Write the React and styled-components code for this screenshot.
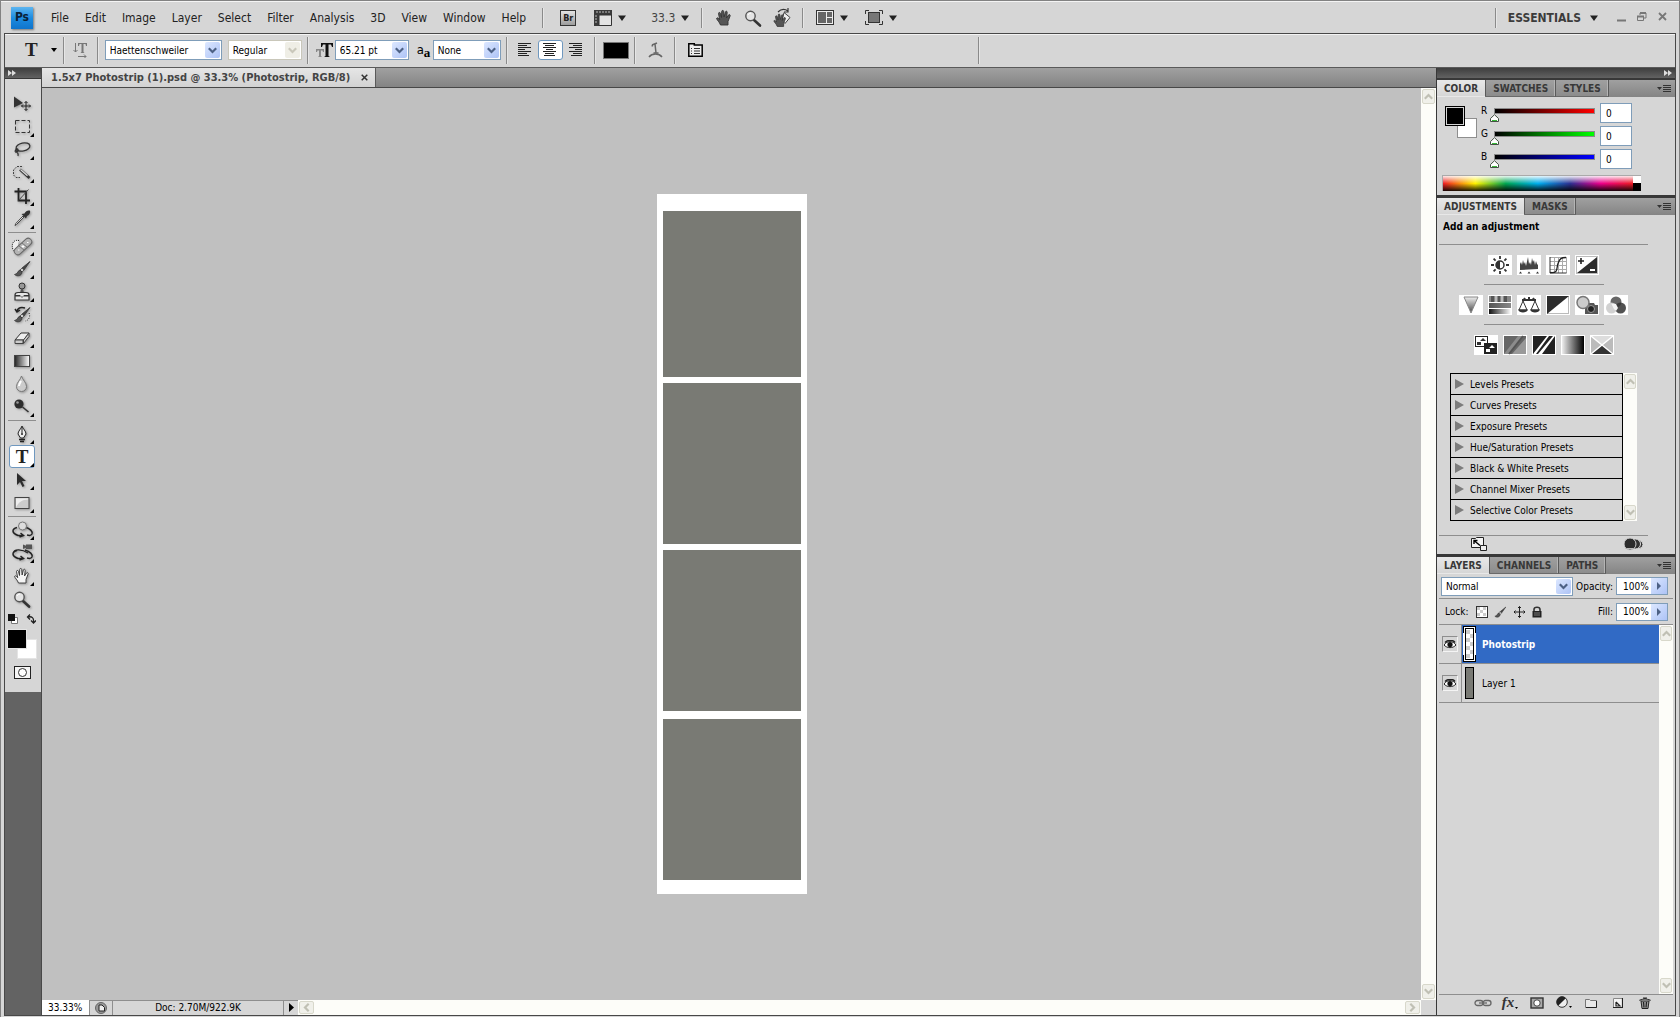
import React from "react";
import styled, { createGlobalStyle, css } from "styled-components";

const GlobalStyle = createGlobalStyle`
  * {
    box-sizing: border-box;
  }

  body {
    margin: 0;
    background: #d6d6d6;
    font-family: "DejaVu Sans Condensed", "Noto Sans", sans-serif;
    font-size: 10px;
    color: #000;
  }

  button, input, select {
    margin: 0;
    padding: 0;
    border: 0;
    background: none;
    color: inherit;
    font: inherit;
  }

  svg {
    display: block;
    flex: none;
  }
`;

/* ---------- window frame ---------- */

const Window = styled.div`
  display: flex;
  flex-direction: column;
  min-height: 100vh;
  border: 1px solid #828282;
  border-bottom: 0;
  background: #d6d6d6;
`;

const Workspace = styled.div`
  flex: 1;
  display: flex;
  flex-direction: column;
  margin: 0 3px 1px;
  border: 1px solid #484848;
`;

const Body = styled.div`
  flex: 1;
  display: grid;
  grid-template-columns: 37px minmax(0, 1fr) 239px;
`;

/* ---------- menu bar ---------- */

const MenuBar = styled.header`
  display: flex;
  align-items: center;
  height: 32px;
  padding: 0 12px 0 10px;
  border-top: 1px solid #f4f4f4;
`;

const Logo = styled.div`
  width: 22px;
  height: 22px;
  margin-right: 10px;
  background: linear-gradient(#5db5f0, #1c8be0 50%, #0f74cc);
  box-shadow: 1px 1px 2px #777;
  color: #0a2138;
  font-size: 12px;
  font-weight: bold;
  line-height: 21px;
  text-align: center;
`;

const Menu = styled.nav`
  display: flex;
`;

const MenuItem = styled.button`
  padding: 0 8px;
  font-size: 12px;
  line-height: 20px;
  color: #222;
`;

const Divider = styled.span`
  flex: none;
  width: 1px;
  height: ${({ $tall }) => ($tall ? 27 : 20)}px;
  margin: 0 ${({ $after }) => $after || 0}px 0 ${({ $before }) => $before || 0}px;
  background: #8a8a8a;
  box-shadow: 1px 0 #e6e6e6;
`;

const AppButton = styled.button`
  display: flex;
  align-items: center;
  gap: 6px;
  height: 20px;
  margin-right: ${({ $after }) => $after || 0}px;
  font-size: ${({ $size }) => $size || 11}px;
  color: #444;
`;

const BridgeBadge = styled.span`
  width: 16px;
  height: 16px;
  border: 1px solid #333;
  background: linear-gradient(#e4e4e4, #9c9c9c);
  color: #222;
  font-size: 9px;
  font-weight: bold;
  line-height: 14px;
  text-align: center;
`;

const WorkspaceName = styled(AppButton)`
  gap: 9px;
  font-size: 12px;
  font-weight: bold;
  color: #3c3c3c;
`;

const Spacer = styled.span`
  flex: 1;
`;

/* ---------- options bar ---------- */

const OptionsBar = styled.div`
  display: flex;
  align-items: center;
  height: 34px;
  padding: 0 0 2px 4px;
  border-top: 1px solid #f4f4f4;
  border-bottom: 1px solid #5a5a5a;
`;

const Grip = styled.span`
  width: ${({ $wide }) => ($wide ? "26px" : "4px")};
  height: ${({ $wide }) => ($wide ? "4px" : "24px")};
  background: radial-gradient(circle, #8c8c8c 40%, transparent 50%) 0 0 / 2px 2px;
`;

const SerifT = styled.span`
  font-family: "Liberation Serif", serif;
  font-size: 19px;
  font-weight: bold;
  line-height: 20px;
  color: #222;
`;

const SelectBox = styled.span`
  position: relative;
  display: block;
  flex: none;
  width: ${({ $width }) => $width}px;
  height: ${({ $height }) => $height || 20}px;
  margin-right: ${({ $after }) => $after || 0}px;
  border: 1px solid ${({ $off }) => ($off ? "#c9c7ba" : "#7f9db9")};
  background: #fff;

  select {
    appearance: none;
    display: block;
    width: 100%;
    height: 100%;
    padding: 0 17px 0 4px;
    color: #000;
    opacity: 1;
  }
`;

const DropArrow = styled.span`
  position: absolute;
  top: 1px;
  right: 1px;
  bottom: 1px;
  display: flex;
  align-items: center;
  justify-content: center;
  width: 15px;
  border-radius: 2px;
  background: ${({ $off }) => ($off ? "#efeee6" : "linear-gradient(135deg, #dce7ff, #adc3f6)")};
  color: ${({ $off }) => ($off ? "#c9c7ba" : "#4d6185")};
  pointer-events: none;
`;

const AlignButton = styled.button`
  display: flex;
  align-items: center;
  justify-content: center;
  width: 25px;
  height: 20px;
  border: 1px solid ${({ $on }) => ($on ? "#6f98bf" : "transparent")};
  border-radius: 3px;
  background: ${({ $on }) => ($on ? "#fff" : "none")};
`;

const TextColor = styled.button`
  width: 26px;
  height: 17px;
  border: 1px solid #777;
  background: #000;
`;

const AntiAlias = styled.span`
  width: 16px;
  font-size: 13px;
  line-height: 16px;

  sub {
    font-family: "Liberation Serif", serif;
    font-size: 13px;
    font-weight: bold;
    line-height: 0;
    vertical-align: -3px;
  }
`;

const OptionsEnd = styled.span`
  display: flex;
  justify-content: flex-end;
  width: 276px;
`;

/* ---------- tools ---------- */

const ToolColumn = styled.aside`
  background: #636363;
  border-right: 1px solid #484848;
`;

const DockHeader = styled.div`
  display: flex;
  align-items: center;
  justify-content: ${({ $right }) => ($right ? "flex-end" : "flex-start")};
  height: 11px;
  padding: 0 3px;
  background: linear-gradient(#3e3e3e, #626262);
  border-bottom: 1px solid #383838;
`;

const ToolPanel = styled.div`
  display: flex;
  flex-direction: column;
  align-items: center;
  height: 613px;
  padding-right: 2px;
  background: #d6d6d6;
`;

const ToolGrip = styled.div`
  height: 13px;
  padding-top: 5px;
`;

const ToolButton = styled.button`
  display: flex;
  align-items: center;
  justify-content: center;
  position: relative;
  width: 26px;
  height: 23px;
  border: 1px solid transparent;

  svg {
    filter: drop-shadow(1px 1px 1px rgba(0, 0, 0, 0.3));
  }

  ${({ $on }) =>
    $on &&
    css`
      border-color: #6f98bf;
      border-radius: 3px;
      background: #fff;
    `}

  ${({ $more }) =>
    $more &&
    css`
      &::after {
        content: "";
        position: absolute;
        right: 0;
        bottom: 0;
        border: 2px solid #000;
        border-top-color: transparent;
        border-left-color: transparent;
      }
    `}
`;

const ToolRule = styled.div`
  width: 28px;
  height: 1px;
  margin: 2px 0 1px;
  background: #8e8e8e;
`;

const ColorMini = styled.div`
  display: flex;
  justify-content: space-between;
  width: 28px;
  margin: 4px 0 5px;
`;

const ColorPair = styled.div`
  position: relative;
  width: 30px;
  height: 30px;
`;

const PanelPair = styled(ColorPair)`
  width: 32px;
  height: 32px;
  margin-top: 3px;
`;

const Swatch = styled.button`
  position: absolute;
  width: 20px;
  height: 20px;
  background: ${({ $color }) => $color};
  ${({ $front }) => ($front ? "top: 0; left: 0;" : "right: 0; bottom: 0;")}
  ${({ $front, $ring }) =>
    $front && $ring
      ? "border: 1px solid #000; box-shadow: inset 0 0 0 1px #d6d6d6;"
      : `border: 1px solid ${$front ? "#e4e4e4" : $ring ? "#8e8e8e" : "#e4e4e4"};`}
`;

const MaskButton = styled.button`
  display: flex;
  align-items: center;
  justify-content: center;
  width: 17px;
  height: 13px;
  margin-top: 7px;
  border: 1px solid #222;
  background: #f6f6f6;
`;

/* ---------- document ---------- */

const Document = styled.main`
  display: grid;
  grid-template-rows: 20px minmax(0, 1fr) 15px;
`;

const TabStrip = styled.div`
  display: flex;
  background: linear-gradient(#a0a0a0, #848484);
  border-bottom: 1px solid #484848;
`;

const DocTab = styled.div`
  display: flex;
  align-items: center;
  gap: 10px;
  padding: 0 6px 0 9px;
  border-right: 1px solid #5a5a5a;
  background: linear-gradient(#e6e6e6, #d2d2d2);
  color: #444;
  font-size: 11px;
  font-weight: bold;
  white-space: nowrap;
`;

const CloseTab = styled.button`
  display: flex;
  padding: 1px;
`;

const View = styled.div`
  display: grid;
  grid-template-columns: minmax(0, 1fr) 15px;
`;

const Canvas = styled.div`
  display: flex;
  align-items: center;
  justify-content: center;
  background: #c0c0c0;
`;

const Strip = styled.div`
  display: flex;
  flex-direction: column;
  gap: 6px;
  width: 150px;
  padding: 17px 6px 14px;
  background: #fff;
`;

const Photo = styled.div`
  height: ${({ $height }) => $height || 161}px;
  background: #797a74;

  &:last-child {
    margin-top: 2px;
  }
`;

const ScrollTrack = styled.div`
  display: flex;
  flex-direction: ${({ $row }) => ($row ? "row" : "column")};
  align-items: stretch;
  justify-content: space-between;
  flex: ${({ $row }) => ($row ? "1" : "none")};
  min-width: 14px;
  padding: 1px;
  background: #fdfdf9;
`;

const ScrollButton = styled.button`
  display: flex;
  align-items: center;
  justify-content: center;
  min-width: ${({ $row }) => ($row ? "15px" : "12px")};
  height: ${({ $row }) => ($row ? "13px" : "15px")};
  border: 1px solid #d8d8cb;
  border-radius: 2px;
  background: #f0f0ea;
  color: #c0c0b4;
`;

const StatusBar = styled.footer`
  display: flex;
  background: #d6d6d6;
`;

const ZoomInput = styled.input`
  width: 47px;
  padding-left: 6px;
  background: #fff;
  outline: 0;
`;

const StatusCell = styled.button`
  display: flex;
  align-items: center;
  justify-content: center;
  width: ${({ $width }) => $width}px;
  padding-bottom: 1px;
  border: 1px solid #8e8e8e;
  border-width: 1px 0 0 1px;
`;

const Corner = styled.span`
  width: 15px;
  background: #d6d6d6;
`;

/* ---------- dock panels ---------- */

const Dock = styled.aside`
  display: flex;
  flex-direction: column;
  border-left: 1px solid #383838;
  background: #383838;
`;

const Panel = styled.section`
  display: flex;
  flex-direction: column;
  flex: ${({ $grow }) => ($grow ? "1" : "none")};
  margin-top: ${({ $first }) => ($first ? 1 : 3)}px;
  background: #d6d6d6;
`;

const Tabs = styled.div`
  display: flex;
  height: 17px;
  background: linear-gradient(#a0a0a0, #848484);
`;

const Tab = styled.button`
  padding: 1px 7px 0;
  border-right: 1px solid #5a5a5a;
  border-bottom: 1px solid ${({ $on }) => ($on ? "transparent" : "#6a6a6a")};
  background: ${({ $on }) => ($on ? "linear-gradient(#e8e8e8, #d6d6d6)" : "linear-gradient(#a0a0a0, #8c8c8c)")};
  box-shadow: inset -1px 0 ${({ $on }) => ($on ? "transparent" : "#b4b4b4")};
  color: #383838;
  font-size: 10px;
  font-weight: bold;
  line-height: 15px;
`;

const PanelMenu = styled.button`
  display: flex;
  align-items: center;
  margin-left: auto;
  padding-right: 4px;
`;

const ColorBody = styled.div`
  padding: 6px 34px 4px 5px;
`;

const ColorRows = styled.div`
  display: flex;
  padding: 0 9px 0 3px;
`;

const Channels = styled.div`
  flex: 1;
  display: flex;
  flex-direction: column;
  gap: 4px;
  margin-left: 4px;
`;

const ChannelRow = styled.div`
  display: grid;
  grid-template-columns: 9px minmax(0, 1fr) 32px;
  height: 19px;

  label {
    line-height: 15px;
  }
`;

const thumbSvg =
  "url(\"data:image/svg+xml,%3Csvg xmlns='http://www.w3.org/2000/svg' width='9' height='8'%3E%3Cpath d='M4.5 0.7L8.5 4.5V7.5H.5V4.5Z' fill='%23fff' stroke='%23445044'/%3E%3Cpath d='M2 6.5h5' stroke='%2338b838'/%3E%3C/svg%3E\")";

const ChannelSlider = styled.input`
  appearance: none;
  width: 100%;
  height: 15px;
  margin-top: 5px;
  background:
    linear-gradient(90deg, #000, ${({ $color }) => $color}) 5px 1px / calc(100% - 11px) 4px no-repeat,
    linear-gradient(#8a8a8a, #8a8a8a) 4px 0 / calc(100% - 9px) 6px no-repeat;

  &::-webkit-slider-thumb {
    appearance: none;
    width: 9px;
    height: 8px;
    margin-top: 4px;
    background: ${thumbSvg};
  }
`;

const NumberInput = styled.input`
  width: 100%;
  padding-left: 5px;
  border: 1px solid #7f9db9;
  background: #fff;
  outline: 0;
`;

const Spectrum = styled.div`
  display: flex;
  height: 16px;
  margin-top: 7px;
  border: 1px solid #aaa;
  border-width: 1px 0 0 1px;
`;

const Hues = styled.div`
  flex: 1;
  background:
    linear-gradient(rgba(255, 255, 255, 0.9), rgba(255, 255, 255, 0) 50%, rgba(0, 0, 0, 0) 50%, rgba(0, 0, 0, 0.9)),
    linear-gradient(90deg, #ee1c24, #fff200 17%, #00a651 33%, #00aeef 50%, #2e3192 67%, #ec008c 83%, #ee1c24);
`;

const SpectrumEnd = styled.div`
  width: 8px;
  background: linear-gradient(#fff 50%, #000 50%);
`;

const AdjustBody = styled.div`
  display: flex;
  flex-direction: column;
  align-items: center;
  padding: 0 27px 0 2px;
`;

const PanelTitle = styled.h2`
  align-self: stretch;
  margin: 0 0 5px;
  padding-left: 4px;
  font-size: 10px;
  font-weight: bold;
  line-height: 24px;
`;

const Rule = styled.hr`
  width: ${({ $short }) => ($short ? "120px" : "100%")};
  margin: ${({ $short }) => ($short ? "9px 0 0" : "0")};
  border: 0;
  border-top: 1px solid #8e8e8e;
`;

const AdjustRow = styled.div`
  display: flex;
  gap: 5px;
  margin-top: 10px;
`;

const AdjustButton = styled.button`
  width: 24px;
  height: 20px;
  background: #fff;
`;

const PresetArea = styled.div`
  align-self: stretch;
  display: flex;
  margin: 18px 11px 14px;
`;

const PresetList = styled.ul`
  flex: 1;
  margin: 0;
  padding: 0;
  border: 1px solid #000;
  border-bottom: 0;
  list-style: none;
`;

const Preset = styled.li`
  height: 21px;
  border-bottom: 1px solid #000;
`;

const PresetButton = styled.button`
  display: flex;
  align-items: center;
  gap: 6px;
  width: 100%;
  height: 20px;
  padding-left: 4px;
`;

const AdjustFooter = styled.div`
  align-self: stretch;
  display: flex;
  align-items: center;
  justify-content: space-between;
  height: 18px;
  padding: 0 4px 2px 32px;
`;

const IconButton = styled.button`
  display: flex;
  align-items: center;
`;

const LayersBody = styled.div`
  flex: 1;
  display: flex;
  flex-direction: column;
  padding: 0 2px;
`;

const LayerOptions = styled.div`
  display: flex;
  align-items: center;
  height: ${({ $tall }) => ($tall ? 26 : 25)}px;
  padding: 0 5px 0 ${({ $tall }) => ($tall ? 6 : 2)}px;
  border-bottom: 1px solid #8e8e8e;
`;

const FieldLabel = styled.label`
  margin-left: auto;
  padding-right: 3px;
`;

const LockIcons = styled.div`
  display: flex;
  align-items: center;
  gap: 6px;
  margin-left: 7px;
`;

const PercentBox = styled.span`
  display: flex;
  width: 52px;
  height: 18px;
  border: 1px solid #7f9db9;
  background: #fff;

  input {
    flex: 1;
    min-width: 0;
    padding-left: 6px;
    outline: 0;
  }

  button {
    display: flex;
    align-items: center;
    justify-content: center;
    width: 16px;
    background: linear-gradient(135deg, #dce7ff, #adc3f6);
  }
`;

const LayerArea = styled.div`
  flex: 1;
  display: flex;
`;

const LayerList = styled.ul`
  flex: 1;
  margin: 0;
  padding: 0;
  list-style: none;
`;

const LayerRow = styled.li`
  display: flex;
  height: 39px;
  border-bottom: 1px solid #8e8e8e;
`;

const EyeCell = styled.div`
  display: flex;
  align-items: center;
  width: 23px;
  padding-left: 3px;
  border-right: 1px solid #8e8e8e;
`;

const EyeButton = styled.button`
  display: flex;
  align-items: center;
  justify-content: center;
  width: 16px;
  height: 16px;
  border: 1px solid;
  border-color: #8e8e8e #f4f4f4 #f4f4f4 #8e8e8e;
`;

const LayerName = styled.div`
  flex: 1;
  display: flex;
  align-items: center;
  gap: 6px;
  padding-left: 1px;
  background: ${({ $on }) => ($on ? "#316ac5" : "none")};
  color: ${({ $on }) => ($on ? "#fff" : "#000")};
  font-weight: ${({ $on }) => ($on ? "bold" : "normal")};
`;

const LayerFooter = styled.div`
  display: flex;
  align-items: center;
  justify-content: flex-end;
  gap: 3px;
  height: 21px;
  padding: 0 16px 5px 0;
  border-top: 1px solid #8e8e8e;
`;

const FooterButton = styled.button`
  display: flex;
  align-items: center;
  justify-content: center;
  width: 24px;
  height: 15px;
`;

const FxButton = styled(FooterButton)`
  align-items: flex-end;
  color: #333;
  font-family: "Liberation Serif", serif;
  font-size: 15px;
  font-style: italic;
  font-weight: bold;
  line-height: 15px;
`;

/* ---------- drawings ---------- */

const Icon = ({ w = 24, h = 20, children }) => (
  <svg width={w} height={h} viewBox={`0 0 ${w} ${h}`} fill="none" aria-hidden="true">
    {children}
  </svg>
);

const Caret = () => (
  <Icon w={8} h={6}>
    <path d="M0 0.5h8L4 6z" fill="#222" />
  </Icon>
);

const SmallCaret = () => (
  <Icon w={6} h={4}>
    <path d="M0 0h6L3 4z" fill="#000" />
  </Icon>
);

const Chevron = ({ turn = 0 }) => (
  <svg width="9" height="9" viewBox="0 0 9 9" fill="none" aria-hidden="true">
    <path d="M.8 2.3L4.500 6L8.200 2.300" stroke="currentColor" strokeWidth="2.200" transform={`rotate(${turn} 4.500 4.500)`} />
  </svg>
);

const DoubleArrow = () => (
  <Icon w={8} h={6}>
    <path d="M0 0l4 3-4 3zM4 0l4 3-4 3z" fill="#ddd" />
  </Icon>
);

const FourWay = ({ x, y, r = 4 }) => (
  <g transform={`translate(${x} ${y})`} stroke="#222" strokeWidth="1">
    <path d={`M${-r} 0H${r}M0 ${-r}V${r}`} />
    <path
      d={`M-1.5 ${1.5 - r}L0 ${-r}L1.5 ${1.5 - r}M-1.5 ${r - 1.5}L0 ${r}L1.5 ${r - 1.5}M${1.5 - r} -1.5L${-r} 0L${1.5 - r} 1.5M${r - 1.5} -1.5L${r} 0L${r - 1.5} 1.5`}
    />
  </g>
);

const BrushShape = () => (
  <>
    <path d="M20 2.5L12 9l2 2z" fill="#444" stroke="#333" strokeWidth="0.8" />
    <path d="M12 9l2 2-2 2-2-2z" fill="#ccc" stroke="#444" strokeWidth="0.8" />
    <path d="M10 11c-2 0-2 4-5.500 4.500C7 18 12 17 12 13z" fill="#555" stroke="#222" strokeWidth="0.6" />
  </>
);

const HandShape = ({ fill }) => (
  <path
    d="M8.500 17C7.500 14 5 12 4.500 10.500c.5-1.300 2-.5 3.200 1.200L6.500 5.500c0-1.300 1.700-1.500 2 0l1 4 .2-6c0-1.400 1.900-1.400 2 0l.4 5.500 1.300-5c.4-1.300 2-.9 1.800.5L14.500 10l2-3c.8-1 2-.2 1.600 1L16 13.500V17z"
    fill={fill}
    stroke="#333"
    strokeWidth="0.9"
    strokeLinejoin="round"
  />
);

const Magnifier = () => (
  <>
    <path d="M13 12l6 5.500" stroke="#333" strokeWidth="2.600" strokeLinecap="round" />
    <circle cx="9.500" cy="8" r="4.700" fill="#e4e4e4" stroke="#555" strokeWidth="1.400" />
    <path d="M7 7a3 3 0 0 1 3-2" stroke="#fff" />
  </>
);

const OrbitShape = () => (
  <path
    d="M7 7.500C1.500 9 1.500 13 8 15.500h4M15 7c5 1.500 8 4.500 7 7-.8 1.600-3 1.600-5 1M10.500 13l3 2.500-4 1.500"
    stroke="#222"
    strokeWidth="1.500"
  />
);

const toolIcons = {
  move: (
    <Icon>
      <path d="M4 2.500v11L13 9z" fill="#333" />
      <FourWay x={16} y={12} r={4.5} />
    </Icon>
  ),
  marquee: (
    <Icon>
      <rect x="5.500" y="3.500" width="14" height="12" stroke="#333" strokeDasharray="4 2" />
    </Icon>
  ),
  lasso: (
    <Icon>
      <ellipse cx="13" cy="7" rx="7" ry="4" stroke="#333" strokeWidth="1.300" transform="rotate(-12 13 7)" />
      <path d="M7 9c-3 1-2 4 0 3s1-4-1-3c-1 2 3 3 2 7" stroke="#333" strokeWidth="1.200" />
    </Icon>
  ),
  wand: (
    <Icon>
      <path d="M12 3.500H7L3.500 7v5L6 14.500h4" stroke="#444" strokeDasharray="2 1" />
      <path d="M10 6.500l9.500 8.500" stroke="#333" strokeWidth="2.600" />
      <path d="M10.500 6.500l7 6.200" stroke="#ddd" strokeWidth="1.200" />
    </Icon>
  ),
  crop: (
    <Icon>
      <path d="M8.500 2v12.500H20M4.500 5.500h11.500V18" stroke="#222" strokeWidth="1.800" />
      <path d="M8.500 14.500l10-11" stroke="#444" />
    </Icon>
  ),
  eyedropper: (
    <Icon>
      <path d="M14 8l-7.500 7.500-1.500 1 .8-2L13 7z" fill="#eee" stroke="#444" />
      <path d="M11.500 5l4.500 4.500 1-2.500c3-1 4-5 2.500-5.500s-4 .5-5 3z" fill="#333" />
    </Icon>
  ),
  heal: (
    <Icon>
      <path d="M9 4.500C4 3.500 1.500 7 2.500 12c.5 3 3 4 4 4" fill="#eee" stroke="#222" strokeDasharray="1 1" />
      <rect x="2.500" y="7" width="21" height="7" rx="3.500" fill="#b4b4b4" stroke="#666" transform="rotate(-42 13 10.500)" />
      <path d="M9 10l5 4M12 7l5 4" stroke="#777" />
      <path d="M13 9v3M11.500 10.500h3M8 14h1.500M17 6.500h1.500" stroke="#fff" />
    </Icon>
  ),
  brush: (
    <Icon>
      <BrushShape />
    </Icon>
  ),
  stamp: (
    <Icon>
      <circle cx="12" cy="4" r="3" fill="#999" stroke="#333" />
      <path d="M11 7h2l1 4h-4z" fill="#555" />
      <path d="M5 18v-5c0-2 1-2.500 3-2.500h8c2 0 3 .5 3 2.500v5z" fill="#e4e4e4" stroke="#333" strokeWidth="1.200" />
      <path d="M5 13h5l2 3 2-3h5v1.500H5z" fill="#333" />
    </Icon>
  ),
  history: (
    <Icon>
      <BrushShape />
      <path d="M15 3c-4-1-7 0-8 3M5 4l2 3 3-2" stroke="#222" strokeWidth="1.500" />
      <path d="M19 8c2 4-1 8-4 8" stroke="#222" strokeDasharray="1 1.500" />
    </Icon>
  ),
  eraser: (
    <Icon>
      <path d="M5 12l6-7h8l-5.500 7z" fill="#eee" stroke="#333" />
      <path d="M5 12v3.500h8V12zM13.500 12L19 5v3.500l-5.500 7z" fill="#ccc" stroke="#444" strokeLinejoin="round" />
    </Icon>
  ),
  gradient: (
    <Icon>
      <defs>
        <linearGradient id="toolGradient">
          <stop stopColor="#222" />
          <stop offset="1" stopColor="#fff" />
        </linearGradient>
      </defs>
      <rect x="4.500" y="4.500" width="15" height="11" fill="url(#toolGradient)" stroke="#444" />
    </Icon>
  ),
  blur: (
    <Icon>
      <path d="M11.500 2c1 4 5 6.500 5 10.500a5 5 0 0 1-10 0C6.500 8.500 10.500 6 11.500 2z" fill="#ccc" stroke="#777" />
      <path d="M9 12c0-2 1-3 2-5" stroke="#fff" strokeWidth="2" />
    </Icon>
  ),
  burn: (
    <Icon>
      <circle cx="9" cy="7" r="4.600" fill="#2c2c2c" />
      <circle cx="7.500" cy="5.500" r="1.300" fill="#999" />
      <path d="M12.500 10l6 5" stroke="#333" strokeWidth="1.600" />
    </Icon>
  ),
  pen: (
    <Icon>
      <path d="M12 2c-1 3-4 5-4 8l2.500 4h3l2.500-4c0-3-3-5-4-8z" fill="#eee" stroke="#222" />
      <path d="M12 3v6" stroke="#222" />
      <circle cx="12" cy="10" r="1" fill="#222" />
      <path d="M9 15.500h6M10 17.500h4" stroke="#222" strokeWidth="1.500" />
    </Icon>
  ),
  select: (
    <Icon>
      <path d="M7 3v12l3-3 2.500 5 2-1-2.500-5h4z" fill="#2c2c2c" />
    </Icon>
  ),
  shape: (
    <Icon>
      <rect x="5" y="4.500" width="14" height="11" fill="#ccc" stroke="#444" />
      <path d="M6 14.500c2-5 6-8 12-8v-1H6z" fill="#eee" />
    </Icon>
  ),
  rotate3d: (
    <Icon>
      <OrbitShape />
      <circle cx="12.500" cy="6" r="4" fill="#ddd" stroke="#777" />
    </Icon>
  ),
  orbit: (
    <Icon>
      <path d="M4 9c0-3 8-3 14 1" stroke="#222" strokeWidth="1.300" />
      <OrbitShape />
      <path d="M13 1.500l3 1.200V1.500h6v4.500h-6V4.800L13 6z" fill="#555" />
    </Icon>
  ),
  hand: (
    <Icon>
      <HandShape fill="#f4f4f4" />
    </Icon>
  ),
  zoom: (
    <Icon>
      <Magnifier />
    </Icon>
  ),
};

const tools = [
  ["move", "Move"],
  ["marquee", "Rectangular Marquee"],
  ["lasso", "Lasso"],
  ["wand", "Quick Selection"],
  ["crop", "Crop"],
  ["eyedropper", "Eyedropper"],
  null,
  ["heal", "Spot Healing Brush"],
  ["brush", "Brush"],
  ["stamp", "Clone Stamp"],
  ["history", "History Brush"],
  ["eraser", "Eraser"],
  ["gradient", "Gradient"],
  ["blur", "Blur"],
  ["burn", "Dodge"],
  null,
  ["pen", "Pen"],
  ["type", "Horizontal Type"],
  ["select", "Path Selection"],
  ["shape", "Rectangle"],
  null,
  ["rotate3d", "3D Rotate"],
  ["orbit", "3D Orbit"],
  ["hand", "Hand"],
  ["zoom", "Zoom"],
];

const Lines = ({ rows }) => (
  <Icon w={14} h={14}>
    {rows.map(([x, w], i) => (
      <rect key={i} x={x} y={i * 2} width={w} height="1" fill="#222" />
    ))}
  </Icon>
);

const widths = [13, 9, 13, 7, 13, 9, 11];
const alignRows = {
  left: widths.map((w) => [0, w]),
  center: widths.map((w) => [(13 - w) / 2, w]),
  right: widths.map((w) => [14 - w, w]),
};

const Ramp = ({ id, from, to, down }) => (
  <linearGradient id={id} x2={down ? 0 : 1} y2={down ? 1 : 0}>
    <stop stopColor={from} />
    <stop offset="1" stopColor={to} />
  </linearGradient>
);

const adjustments = [
  [
    [
      "Brightness/Contrast",
      <>
        <circle cx="12" cy="10" r="4" stroke="#333" strokeWidth="1.500" />
        <path d="M12 6a4 4 0 0 0 0 8z" fill="#333" />
        <path
          d="M12 1v3M12 16v3M3 10h3M18 10h3M5.600 3.600l2 2M16.400 14.400l2 2M5.600 16.400l2-2M16.400 5.600l2-2"
          stroke="#333"
          strokeWidth="1.800"
        />
      </>,
    ],
    [
      "Levels",
      <>
        <path
          d="M3 15V9l1-2 1 3 1-5 1 4 1-2 1 4 2-9 1 7 1-2 1 3 1-7 1 4 1-2 1 5 1-4 1 3 1 1v4z"
          fill="#444"
        />
        <path d="M2 18.500l1.500-2 1.500 2zM10.500 18.500l1.500-2 1.500 2zM19 18.500l1.500-2 1.500 2z" fill="#333" />
      </>,
    ],
    [
      "Curves",
      <>
        <path d="M4 2.500h16M4 6.500h16M4 10.500h16M4 14.500h16M8.500 2v16M12.500 2v16M16.500 2v16M20.500 2v16" stroke="#aaa" />
        <path d="M4 2v16h16.500" stroke="#333" />
        <path d="M4 17.500c9 1 6-4 8-9s3-6 8-6" stroke="#222" strokeWidth="1.300" />
      </>,
    ],
    [
      "Exposure",
      <>
        <rect x="1.500" y="1.500" width="21" height="17" stroke="#bbb" />
        <path d="M22 2v16H2z" fill="#2c2c2c" />
        <path d="M3 6h6M6 3v6" stroke="#222" strokeWidth="1.600" />
        <path d="M15 15h5" stroke="#fff" strokeWidth="2" />
      </>,
    ],
  ],
  [
    [
      "Vibrance",
      <>
        <defs>
          <Ramp id="vib" from="#eee" to="#444" down />
        </defs>
        <path d="M5 2h14l-7 16z" fill="url(#vib)" stroke="#888" />
      </>,
    ],
    [
      "Hue/Saturation",
      <>
        <defs>
          <Ramp id="hs" from="#555" to="#888" />
          <Ramp id="hs2" from="#111" to="#fff" />
        </defs>
        <path d="M1 1h22v6H1z" fill="#888" />
        <path d="M3 1h3v6H3zM10 1h2v6h-2zM16 1h3v6h-3z" fill="#555" />
        <path d="M7 1h2v6H7zM13 1h2v6h-2z" fill="#bbb" />
        <path d="M1 8h22v5H1z" fill="url(#hs)" />
        <path d="M1 14h22v5H1z" fill="url(#hs2)" />
      </>,
    ],
    [
      "Color Balance",
      <>
        <path d="M12 2v4M5 5h14M8 3l-2 3M16 3l2 3" stroke="#333" strokeWidth="2" />
        <path d="M6 6L2 15h8zM18 6l-4 9h8z" stroke="#333" />
        <path d="M1 14.500h10c-1 4-9 4-10 0zM13 14.500h10c-1 4-9 4-10 0z" fill="#333" />
      </>,
    ],
    [
      "Black & White",
      <>
        <rect x="1.500" y="1.500" width="21" height="17" stroke="#bbb" />
        <path d="M1 1h22L1 19z" fill="#2c2c2c" />
      </>,
    ],
    [
      "Photo Filter",
      <>
        <path d="M10 10h3l1-2h5l1 2h3v9H10z" fill="#555" />
        <circle cx="8" cy="7.500" r="6" fill="#ccc" stroke="#777" strokeWidth="1.500" />
        <circle cx="16" cy="14" r="3.500" fill="#222" stroke="#999" />
      </>,
    ],
    [
      "Channel Mixer",
      <>
        <circle cx="12" cy="7" r="5.500" fill="#666" />
        <circle cx="7.500" cy="13" r="5.500" fill="#ccc" fillOpacity="0.9" />
        <circle cx="16.500" cy="13" r="5.500" fill="#333" fillOpacity="0.85" />
        <path d="M7 8.500l5 .5 2 4-2 3-2-2z" fill="#f4f4f4" />
      </>,
    ],
  ],
  [
    [
      "Invert",
      <>
        <rect x="1.500" y="1.500" width="12" height="10" stroke="#222" />
        <path d="M3 7h4v3H3zM6 6l3-3 3 3z" fill="#333" />
        <path d="M10 8h13v11H10z" fill="#222" />
        <path d="M12 14h4v3h-4zM15 13l3-3 3 3z" fill="#fff" />
      </>,
    ],
    [
      "Posterize",
      <>
        <path d="M1 1h22v18H1z" fill="#666" />
        <path d="M1 19L15 1h5L6 19z" fill="#8c8c8c" />
        <path d="M9 19L23 3v16z" fill="#999" />
        <path d="M6 19L20 1" stroke="#555" strokeWidth="2" />
      </>,
    ],
    [
      "Threshold",
      <>
        <path d="M1 1h22v18H1z" fill="#222" />
        <path d="M1 19L15 1h2L4 19zM6 19L21 1h2L10 19z" fill="#fff" />
        <path d="M1 19v-5l4-4z" fill="#222" />
      </>,
    ],
    [
      "Gradient Map",
      <>
        <defs>
          <Ramp id="gm" from="#eee" to="#000" />
        </defs>
        <path d="M1 1h22v18H1z" fill="url(#gm)" />
      </>,
    ],
    [
      "Selective Color",
      <>
        <path d="M1 1h22v18H1z" fill="#bbb" />
        <path d="M1 1h22l-11 9z" fill="#ddd" />
        <path d="M1 19h22l-11-9z" fill="#333" />
        <path d="M1 1l22 18M23 1L1 19" stroke="#fff" strokeWidth="1.500" />
      </>,
    ],
  ],
];

const presets = ["Levels", "Curves", "Exposure", "Hue/Saturation", "Black & White", "Channel Mixer", "Selective Color"];
const menus = ["File", "Edit", "Image", "Layer", "Select", "Filter", "Analysis", "3D", "View", "Window", "Help"];
const channels = [
  ["R", "#f00"],
  ["G", "#0f0"],
  ["B", "#00f"],
];

/* ---------- parts ---------- */

const Dropdown = ({ label, value, width, height, after, off }) => (
  <SelectBox $width={width} $height={height} $after={after} $off={off}>
    <select aria-label={label} defaultValue={value} disabled={off}>
      <option>{value}</option>
    </select>
    <DropArrow $off={off}>
      <Chevron />
    </DropArrow>
  </SelectBox>
);

const Scrollbar = ({ row }) => (
  <ScrollTrack $row={row}>
    <ScrollButton $row={row} aria-label={row ? "Scroll left" : "Scroll up"}>
      <Chevron turn={row ? 90 : 180} />
    </ScrollButton>
    <ScrollButton $row={row} aria-label={row ? "Scroll right" : "Scroll down"}>
      <Chevron turn={row ? -90 : 0} />
    </ScrollButton>
  </ScrollTrack>
);

const PanelTabs = ({ names }) => (
  <Tabs>
    {names.map((name, i) => (
      <Tab key={name} $on={i === 0}>
        {name}
      </Tab>
    ))}
    <PanelMenu aria-label="Panel menu">
      <Icon w={14} h={8}>
        <path d="M0 2h5L2.500 5z" fill="#333" />
        <path d="M6 0.5h8M6 2.500h8M6 4.500h8M6 6.500h8" stroke="#333" />
      </Icon>
    </PanelMenu>
  </Tabs>
);

const Percent = ({ id }) => (
  <PercentBox>
    <input id={id} defaultValue="100%" />
    <button aria-label={`Open ${id} slider`}>
      <Icon w={4} h={8}>
        <path d="M0 0l4 4-4 4z" fill="#4d6185" />
      </Icon>
    </button>
  </PercentBox>
);

const TopBar = () => (
  <MenuBar>
    <Logo>Ps</Logo>
    <Menu>
      {menus.map((name) => (
        <MenuItem key={name}>{name}</MenuItem>
      ))}
    </Menu>
    <Divider $before={8} $after={17} />
    <AppButton $after={18} aria-label="Launch Bridge">
      <BridgeBadge>Br</BridgeBadge>
    </AppButton>
    <AppButton $after={25} aria-label="View extras">
      <Icon w={18} h={16}>
        <path d="M0 0h18v5H5v11H0z" fill="#3a3a3a" />
        <path d="M5 5h12.500v10.500H5z" fill="#e4e4e4" stroke="#333" />
        <path d="M3 1v2M6 1v2M9 1v2M12 1v2M15 1v2M1 6h2M1 9h2M1 12h2" stroke="#bbb" />
      </Icon>
      <Caret />
    </AppButton>
    <AppButton $after={12} $size={12}>
      33.3
      <Caret />
    </AppButton>
    <Divider $after={10} />
    <AppButton $after={5} aria-label="Hand tool">
      <Icon>
        <HandShape fill="#555" />
      </Icon>
    </AppButton>
    <AppButton $after={5} aria-label="Zoom tool">
      <Icon>
        <Magnifier />
      </Icon>
    </AppButton>
    <AppButton $after={8} aria-label="Rotate view tool">
      <Icon>
        <path d="M14 4.500l6 5-5 6-3-3z" fill="#eee" stroke="#444" />
        <g transform="translate(0 4) scale(0.85)">
          <HandShape fill="#555" />
        </g>
        <path d="M8 4c3-3 7-3 10-1M18 0v4h-4" stroke="#333" strokeWidth="1.200" />
      </Icon>
    </AppButton>
    <Divider $after={13} />
    <AppButton $after={17} aria-label="Arrange documents">
      <Icon w={18} h={15}>
        <rect x="0.5" y="0.5" width="17" height="14" fill="#eee" stroke="#333" />
        <path d="M2 2h8v11H2zM11 2h5v5h-5zM11 8h5v5h-5z" fill="#666" />
      </Icon>
      <Caret />
    </AppButton>
    <AppButton aria-label="Screen mode">
      <Icon w={18} h={15}>
        <path d="M0.5 4V.5H4M14 .5h3.500V4M17.500 11v3.500H14M4 14.500H.5V11" stroke="#333" />
        <rect x="3.500" y="2.500" width="11" height="10" fill="#777" stroke="#333" />
      </Icon>
      <Caret />
    </AppButton>
    <Spacer />
    <Divider $after={12} />
    <WorkspaceName $after={19}>
      ESSENTIALS
      <Caret />
    </WorkspaceName>
    <AppButton $after={11} aria-label="Minimize">
      <Icon w={9} h={9}>
        <path d="M0 7.500h9" stroke="#777" strokeWidth="2" />
      </Icon>
    </AppButton>
    <AppButton $after={11} aria-label="Restore">
      <Icon w={10} h={12}>
        <path d="M3 3V1h6v5H7M0.5 4.500h6v4h-6z" stroke="#777" />
        <path d="M3 1h6M0 4.500h7" stroke="#777" strokeWidth="2" />
      </Icon>
    </AppButton>
    <AppButton aria-label="Close">
      <Icon w={9} h={11}>
        <path d="M1 1l7 7M8 1L1 8" stroke="#777" strokeWidth="1.800" />
      </Icon>
    </AppButton>
  </MenuBar>
);

const TypeOptions = () => (
  <OptionsBar>
    <Grip />
    <AppButton aria-label="Type tool presets">
      <Icon w={6} h={4} />
      <SerifT>T</SerifT>
      <Icon w={1} h={4} />
      <SmallCaret />
    </AppButton>
    <Divider $tall $before={6} $after={9} />
    <AppButton aria-label="Change text orientation">
      <Icon w={16} h={16}>
        <path d="M2.500 1v9M0.5 8l2 2 2-2M5 14.500h8M11 12.500l2 2-2 2" stroke="#777" />
        <path d="M5 1h9v3h-1L12.500 2H10.500v8l1 1h-4l1-1V2H6.500L6 4H5z" fill="#777" />
      </Icon>
    </AppButton>
    <Divider $tall $before={8} $after={7} />
    <Dropdown label="Font family" value="Haettenschweiler" width={117} after={6} />
    <Dropdown label="Font style" value="Regular" width={74} after={5} off />
    <Divider $tall $after={8} />
    <AppButton $after={2} aria-label="Font size">
      <Icon w={17} h={15}>
        <path d="M0 6h8v3H7L6.500 7.500H5V13l1 1H2l1-1V7.500H1.500L1 9H0z" fill="#888" />
        <path d="M5 0h12v4h-1l-1-2.500h-2.500V13l1.500 1H8l1.500-1V1.500H7L6 4H5z" fill="#111" />
      </Icon>
    </AppButton>
    <Dropdown label="Font size" value="65.21 pt" width={74} after={8} />
    <AntiAlias>
      a<sub>a</sub>
    </AntiAlias>
    <Dropdown label="Anti-aliasing" value="None" width={68} after={5} />
    <Divider $tall $after={6} />
    {["left", "center", "right"].map((side) => (
      <AlignButton key={side} $on={side === "center"} aria-label={`Align ${side}`}>
        <Lines rows={alignRows[side]} />
      </AlignButton>
    ))}
    <Divider $tall $before={6} $after={8} />
    <TextColor aria-label="Text color" />
    <Divider $tall $before={5} $after={13} />
    <AppButton aria-label="Warp text">
      <Icon w={15} h={16}>
        <path d="M4 3l5-2M7 2l1 9M5.500 11h5M4 3l.5 1.500" stroke="#666" strokeWidth="1.500" />
        <path d="M1 15c3-4 10-4 13 0" stroke="#666" strokeWidth="1.500" />
      </Icon>
    </AppButton>
    <Divider $tall $before={11} $after={13} />
    <AppButton aria-label="Character and paragraph panels">
      <Icon w={15} h={14}>
        <path d="M.8 3V.8h5.500V2h7.900v11.200H.8z" fill="#eee" stroke="#000" strokeWidth="1.500" />
        <path d="M3 5.500h1M6 5.500h6M3 8h1M6 8h6M3 10.500h1M6 10.500h6" stroke="#333" />
      </Icon>
    </AppButton>
    <OptionsEnd>
      <Divider $tall />
    </OptionsEnd>
  </OptionsBar>
);

const ToolBox = () => (
  <ToolColumn>
    <DockHeader>
      <DoubleArrow />
    </DockHeader>
    <ToolPanel>
      <ToolGrip>
        <Grip $wide as="div" />
      </ToolGrip>
      {tools.map((tool, i) =>
        tool ? (
          <ToolButton key={tool[0]} aria-label={tool[1]} $on={tool[0] === "type"} $more={i > 0 && tool[0] !== "zoom"}>
            {toolIcons[tool[0]] || <SerifT>T</SerifT>}
          </ToolButton>
        ) : (
          <ToolRule key={i} />
        )
      )}
      <ColorMini>
        <Icon w={10} h={10}>
          <path d="M3.500 3.500h6v6h-6z" fill="#fff" stroke="#777" />
          <path d="M0 0h7v7H0z" fill="#111" />
        </Icon>
        <Icon w={10} h={10}>
          <path d="M2 3c4-1 6 1 5.500 5M4 .5L1.500 3 4 5.500M5 6.500L7.500 9 10 6.500" stroke="#222" strokeWidth="1.300" />
        </Icon>
      </ColorMini>
      <ColorPair>
        <Swatch $color="#fff" aria-label="Background color" />
        <Swatch $front $color="#000" aria-label="Foreground color" />
      </ColorPair>
      <MaskButton aria-label="Quick mask mode">
        <Icon w={9} h={9}>
          <circle cx="4.500" cy="4.500" r="4" fill="#fff" stroke="#333" />
        </Icon>
      </MaskButton>
    </ToolPanel>
  </ToolColumn>
);

const DocumentArea = () => (
  <Document>
    <TabStrip>
      <DocTab>
        1.5x7 Photostrip (1).psd @ 33.3% (Photostrip, RGB/8)
        <CloseTab aria-label="Close document">
          <Icon w={7} h={7}>
            <path d="M.7.7l5.600 5.600M6.300.7L.7 6.300" stroke="#333" strokeWidth="1.500" />
          </Icon>
        </CloseTab>
      </DocTab>
    </TabStrip>
    <View>
      <Canvas>
        <Strip>
          <Photo $height={166} />
          <Photo />
          <Photo />
          <Photo />
        </Strip>
      </Canvas>
      <Scrollbar />
    </View>
    <StatusBar>
      <ZoomInput aria-label="Zoom level" defaultValue="33.33%" />
      <StatusCell $width={23} aria-label="Version Cue">
        <Icon w={12} h={12}>
          <circle cx="6" cy="6" r="5.500" fill="#999" stroke="#666" />
          <path d="M4 3h3l2.500 2.500V9H4z" fill="#eee" stroke="#222" />
        </Icon>
      </StatusCell>
      <StatusCell $width={171}>Doc: 2.70M/922.9K</StatusCell>
      <StatusCell $width={15} aria-label="Status options">
        <Icon w={5} h={9}>
          <path d="M0 0l5 4.500L0 9z" fill="#000" />
        </Icon>
      </StatusCell>
      <Scrollbar row />
      <Corner />
    </StatusBar>
  </Document>
);

const ColorPanel = () => (
  <Panel $first>
    <PanelTabs names={["COLOR", "SWATCHES", "STYLES"]} />
    <ColorBody>
      <ColorRows>
        <PanelPair>
          <Swatch $ring $color="#fff" aria-label="Background" />
          <Swatch $ring $front $color="#000" aria-label="Foreground" />
        </PanelPair>
        <Channels>
          {channels.map(([name, color]) => (
            <ChannelRow key={name}>
              <label htmlFor={`value-${name}`}>{name}</label>
              <ChannelSlider
                type="range"
                min="0"
                max="255"
                defaultValue="0"
                $color={color}
                aria-label={`${name} slider`}
              />
              <NumberInput id={`value-${name}`} defaultValue="0" />
            </ChannelRow>
          ))}
        </Channels>
      </ColorRows>
      <Spectrum>
        <Hues />
        <SpectrumEnd />
      </Spectrum>
    </ColorBody>
  </Panel>
);

const AdjustmentsPanel = () => (
  <Panel>
    <PanelTabs names={["ADJUSTMENTS", "MASKS"]} />
    <AdjustBody>
      <PanelTitle>Add an adjustment</PanelTitle>
      <Rule />
      {adjustments.map((row, i) => (
        <React.Fragment key={i}>
          {i > 0 && <Rule $short />}
          <AdjustRow>
            {row.map(([name, drawing]) => (
              <AdjustButton key={name} aria-label={name}>
                <Icon>{drawing}</Icon>
              </AdjustButton>
            ))}
          </AdjustRow>
        </React.Fragment>
      ))}
      <PresetArea>
        <PresetList>
          {presets.map((name) => (
            <Preset key={name}>
              <PresetButton>
                <Icon w={9} h={10}>
                  <path d="M0 0l9 5-9 5z" fill="#7c7c7c" />
                </Icon>
                {name} Presets
              </PresetButton>
            </Preset>
          ))}
        </PresetList>
        <Scrollbar />
      </PresetArea>
      <Rule />
      <AdjustFooter>
        <IconButton aria-label="Expanded view">
          <Icon w={16} h={14}>
            <path d="M.5 1.500h4l1-1h7v10H.5z" fill="#f4f4f4" stroke="#222" />
            <path d="M3 3.500l6 5M3 7V3.500h3.500" stroke="#000" strokeWidth="1.400" />
            <path d="M9.500 8.500h6v5h-6z" fill="#eee" stroke="#222" />
          </Icon>
        </IconButton>
        <IconButton aria-label="Clip to layer">
          <Icon w={20} h={14}>
            <circle cx="15" cy="7.500" r="4" fill="#333" stroke="#ddd" />
            <circle cx="11.500" cy="7" r="5" fill="#333" stroke="#ddd" />
            <circle cx="6" cy="7" r="6" fill="#2c2c2c" stroke="#ccc" />
            <path d="M3 11.500h6" stroke="#bbb" />
          </Icon>
        </IconButton>
      </AdjustFooter>
    </AdjustBody>
  </Panel>
);

const Eye = () => (
  <Icon w={12} h={9}>
    <path d="M0 5c3-4.500 9-4.500 12 0-3 3.500-9 3.500-12 0z" fill="#fff" stroke="#222" />
    <circle cx="6" cy="4.500" r="2.600" fill="#111" />
    <path d="M1 2.500C4-.5 9-.5 11 2.500" stroke="#222" strokeWidth="1.400" />
  </Icon>
);

const LayersPanel = () => (
  <Panel $grow>
    <PanelTabs names={["LAYERS", "CHANNELS", "PATHS"]} />
    <LayersBody>
      <LayerOptions>
        <Dropdown label="Blend mode" value="Normal" width={132} height={19} />
        <FieldLabel htmlFor="opacity">Opacity:</FieldLabel>
        <Percent id="opacity" />
      </LayerOptions>
      <LayerOptions $tall>
        Lock:
        <LockIcons>
          <IconButton aria-label="Lock transparent pixels">
            <Icon w={12} h={12}>
              <rect x=".5" y=".5" width="11" height="11" fill="#fff" stroke="#333" />
              <path d="M1 1h3v3H1zM7 1h3v3H7zM4 4h3v3H4zM1 7h3v3H1zM7 7h3v3H7z" fill="#ccc" />
            </Icon>
          </IconButton>
          <IconButton aria-label="Lock image pixels">
            <svg width="13" height="12" viewBox="4 1 17 17" fill="none" aria-hidden="true">
              <BrushShape />
            </svg>
          </IconButton>
          <IconButton aria-label="Lock position">
            <Icon w={13} h={12}>
              <FourWay x={6.5} y={6} r={5.5} />
            </Icon>
          </IconButton>
          <IconButton aria-label="Lock all">
            <Icon w={10} h={12}>
              <path d="M2 6V3.500c0-3 6-3 6 0V6" stroke="#333" strokeWidth="1.600" />
              <path d="M.5 5h9v6.500h-9z" fill="#222" />
              <path d="M2 7h6M2 9h6" stroke="#777" />
            </Icon>
          </IconButton>
        </LockIcons>
        <FieldLabel htmlFor="fill">Fill:</FieldLabel>
        <Percent id="fill" />
      </LayerOptions>
      <LayerArea>
        <LayerList>
          <LayerRow>
            <EyeCell>
              <EyeButton aria-label="Toggle Photostrip">
                <Eye />
              </EyeButton>
            </EyeCell>
            <LayerName $on>
              <Icon w={13} h={36}>
                <rect x=".5" y=".5" width="12" height="35" fill="#fff" stroke="#000" />
                <path d="M0 7v22M13 7v22" stroke="#fff" strokeWidth="2" />
                <rect x="2.500" y="2.500" width="8" height="31" fill="#fff" stroke="#000" />
                <path
                  d="M3 4h4v4H3zM7 8h3v4H7zM3 12h4v4H3zM7 16h3v4H7zM3 20h4v4H3zM7 24h3v4H7zM3 28h4v4H3z"
                  fill="#ccc"
                />
              </Icon>
              Photostrip
            </LayerName>
          </LayerRow>
          <LayerRow>
            <EyeCell>
              <EyeButton aria-label="Toggle Layer 1">
                <Eye />
              </EyeButton>
            </EyeCell>
            <LayerName>
              <Icon w={13} h={36}>
                <rect x="2.500" y="2.500" width="8" height="31" fill="#797a74" stroke="#000" />
              </Icon>
              Layer 1
            </LayerName>
          </LayerRow>
        </LayerList>
        <Scrollbar />
      </LayerArea>
      <LayerFooter>
        <FooterButton aria-label="Link layers">
          <Icon w={18} h={8}>
            <rect x="1" y="1.500" width="8" height="5" rx="2.500" stroke="#666" strokeWidth="1.300" />
            <rect x="9" y="1.500" width="8" height="5" rx="2.500" stroke="#666" strokeWidth="1.300" />
            <path d="M5 4h8" stroke="#666" strokeWidth="1.300" />
          </Icon>
        </FooterButton>
        <FxButton aria-label="Layer style">
          fx
          <Icon w={4} h={3}>
            <path d="M1 0h3L2.500 2z" fill="#000" />
          </Icon>
        </FxButton>
        <FooterButton aria-label="Add mask">
          <Icon w={14} h={12}>
            <rect x="1" y="1" width="12" height="10" fill="#aaa" stroke="#333" strokeWidth="1.400" />
            <circle cx="7" cy="6" r="3.200" fill="#fff" stroke="#444" />
          </Icon>
        </FooterButton>
        <FooterButton aria-label="New adjustment layer">
          <Icon w={16} h={13}>
            <circle cx="6" cy="6" r="5.300" fill="#eee" stroke="#333" />
            <path d="M9.800 2.200A5.300 5.300 0 1 0 2.200 9.800z" fill="#222" />
            <path d="M13 10h3l-1.500 2z" fill="#000" />
          </Icon>
        </FooterButton>
        <FooterButton aria-label="New group">
          <Icon w={12} h={10}>
            <path d="M.5 9.500v-8h4l1 1h6v7z" fill="#e8e8e8" stroke="#777" />
            <path d="M11.500 3v6.500H1" stroke="#222" />
          </Icon>
        </FooterButton>
        <FooterButton aria-label="New layer">
          <Icon w={10} h={10}>
            <path d="M.5.5h9v9h-9z" fill="#f4f4f4" stroke="#888" />
            <path d="M9.500 0v9.500H0M3 4v4h4L3 4" stroke="#222" strokeWidth="1.200" />
          </Icon>
        </FooterButton>
        <FooterButton aria-label="Delete layer">
          <Icon w={12} h={12}>
            <path d="M2 4h8l-1 7.500H3z" fill="#999" stroke="#222" />
            <path d="M.5 3.500c2-2 9-2 11 0M4 1h4M4.500 5l.5 5.500M7.500 5L7 10.500" stroke="#222" strokeWidth="1.200" />
          </Icon>
        </FooterButton>
      </LayerFooter>
    </LayersBody>
  </Panel>
);

const App = () => (
  <>
    <GlobalStyle />
    <Window>
      <TopBar />
      <Workspace>
        <TypeOptions />
        <Body>
          <ToolBox />
          <DocumentArea />
          <Dock>
            <DockHeader $right>
              <DoubleArrow />
            </DockHeader>
            <ColorPanel />
            <AdjustmentsPanel />
            <LayersPanel />
          </Dock>
        </Body>
      </Workspace>
    </Window>
  </>
);

export default App;
